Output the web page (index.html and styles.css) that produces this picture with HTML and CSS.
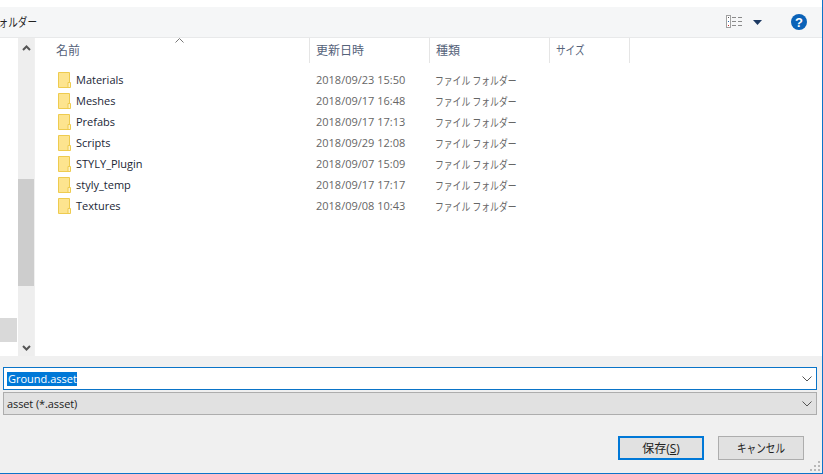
FILE: index.html
```html
<!DOCTYPE html>
<html lang="ja">
<head>
<meta charset="utf-8">
<title>保存</title>
<link rel="stylesheet" href="styles.css">
</head>
<body>
<div class="window">
  <div class="titlebar"></div>
  <div class="toolbar">
    <span class="crumb narrow">フォルダー</span>
    <svg class="view-icon" width="17" height="14" viewBox="0 0 17 14">
      <rect x="0.5" y="0.5" width="4" height="12" fill="#fff" stroke="#a0a0a0"/>
      <rect x="2" y="2" width="1" height="1" fill="#555"/>
      <rect x="2" y="6" width="1" height="1" fill="#2a6ab0"/>
      <rect x="2" y="10" width="1" height="1" fill="#c03030"/>
      <path d="M6 2.5h4M12 2.5h4M6 6.5h4M12 6.5h4M6 10.5h4M12 10.5h4" stroke="#8a8a8a" fill="none"/>
    </svg>
    <svg class="caret" width="9" height="5" viewBox="0 0 9 5"><path d="M0 0h9L4.5 5z" fill="#1d3a63"/></svg>
    <svg class="help" width="16" height="16" viewBox="0 0 16 16">
      <circle cx="8" cy="8" r="8" fill="#0a62b8"/>
      <text x="8" y="12.5" class="help-mark">?</text>
    </svg>
  </div>
  <div class="main">
    <div class="nav">
      <div class="nav-selected"></div>
    </div>
    <div class="scrollbar">
      <svg width="9" height="6" viewBox="0 0 9 6"><path d="M1 5l3.5-3.5L8 5" fill="none" stroke="#555" stroke-width="2"/></svg>
      <div class="scroll-track"><div class="scroll-thumb"></div></div>
      <svg width="9" height="6" viewBox="0 0 9 6"><path d="M1 1l3.5 3.5L8 1" fill="none" stroke="#555" stroke-width="2"/></svg>
    </div>
    <div class="list">
      <div class="list-head">
        <svg class="sort" width="9" height="5" viewBox="0 0 9 5"><path d="M.5 4.5l4-4 4 4" fill="none" stroke="#777"/></svg>
        <div class="col col-name">名前</div>
        <div class="col col-date">更新日時</div>
        <div class="col col-type">種類</div>
        <div class="col col-size"><span class="narrow">サイズ</span></div>
      </div>
      <div class="rows">
        <div class="row"><svg class="folder" width="13" height="16" viewBox="0 0 13 16"><path d="M.5.5h11v15H.5z" fill="#fde48f" stroke="#eecb4f"/><path d="M10 10.5h2.5v5H10z" fill="#fff3c4" stroke="#eecb4f"/></svg><span class="name">Materials</span><span class="date">2018/09/23 15:50</span><span class="type narrow">ファイル フォルダー</span></div>
        <div class="row"><svg class="folder" width="13" height="16" viewBox="0 0 13 16"><path d="M.5.5h11v15H.5z" fill="#fde48f" stroke="#eecb4f"/><path d="M10 10.5h2.5v5H10z" fill="#fff3c4" stroke="#eecb4f"/></svg><span class="name">Meshes</span><span class="date">2018/09/17 16:48</span><span class="type narrow">ファイル フォルダー</span></div>
        <div class="row"><svg class="folder" width="13" height="16" viewBox="0 0 13 16"><path d="M.5.5h11v15H.5z" fill="#fde48f" stroke="#eecb4f"/><path d="M10 10.5h2.5v5H10z" fill="#fff3c4" stroke="#eecb4f"/></svg><span class="name">Prefabs</span><span class="date">2018/09/17 17:13</span><span class="type narrow">ファイル フォルダー</span></div>
        <div class="row"><svg class="folder" width="13" height="16" viewBox="0 0 13 16"><path d="M.5.5h11v15H.5z" fill="#fde48f" stroke="#eecb4f"/><path d="M10 10.5h2.5v5H10z" fill="#fff3c4" stroke="#eecb4f"/></svg><span class="name">Scripts</span><span class="date">2018/09/29 12:08</span><span class="type narrow">ファイル フォルダー</span></div>
        <div class="row"><svg class="folder" width="13" height="16" viewBox="0 0 13 16"><path d="M.5.5h11v15H.5z" fill="#fde48f" stroke="#eecb4f"/><path d="M10 10.5h2.5v5H10z" fill="#fff3c4" stroke="#eecb4f"/></svg><span class="name">STYLY_Plugin</span><span class="date">2018/09/07 15:09</span><span class="type narrow">ファイル フォルダー</span></div>
        <div class="row"><svg class="folder" width="13" height="16" viewBox="0 0 13 16"><path d="M.5.5h11v15H.5z" fill="#fde48f" stroke="#eecb4f"/><path d="M10 10.5h2.5v5H10z" fill="#fff3c4" stroke="#eecb4f"/></svg><span class="name">styly_temp</span><span class="date">2018/09/17 17:17</span><span class="type narrow">ファイル フォルダー</span></div>
        <div class="row"><svg class="folder" width="13" height="16" viewBox="0 0 13 16"><path d="M.5.5h11v15H.5z" fill="#fde48f" stroke="#eecb4f"/><path d="M10 10.5h2.5v5H10z" fill="#fff3c4" stroke="#eecb4f"/></svg><span class="name">Textures</span><span class="date">2018/09/08 10:43</span><span class="type narrow">ファイル フォルダー</span></div>
      </div>
    </div>
  </div>
  <div class="panel">
    <div class="field field-name">
      <span class="selected-text">Ground.asset</span>
      <svg width="10" height="6" viewBox="0 0 10 6"><path d="M.5.5L5 5 9.5.5" fill="none" stroke="#555"/></svg>
    </div>
    <div class="field field-type">
      <span class="type-text">asset (*.asset)</span>
      <svg width="10" height="6" viewBox="0 0 10 6"><path d="M.5.5L5 5 9.5.5" fill="none" stroke="#555"/></svg>
    </div>
    <div class="buttons">
      <div class="btn btn-primary">保存(<u>S</u>)</div>
      <div class="btn"><span class="narrow">キャンセル</span></div>
    </div>
    <svg class="grip" width="12" height="12" viewBox="0 0 12 12"><path d="M8 0h2v2H8zM4 4h2v2H4zM8 4h2v2H8zM0 8h2v2H0zM4 8h2v2H4zM8 8h2v2H8z" fill="#b8b8b8"/></svg>
  </div>
</div>
</body>
</html>
```
FILE: styles.css
```css
* { box-sizing: border-box; }
html, body { margin: 0; padding: 0; }
body {
  width: 823px;
  height: 474px;
  overflow: hidden;
  font-family: "Open Sans", "Noto Sans CJK JP", sans-serif;
  font-size: 11px;
  color: #1a1a1a;
}
.narrow {
  display: inline-block;
  transform: scaleX(0.8);
  transform-origin: left center;
  white-space: nowrap;
}
.window {
  width: 823px;
  height: 474px;
  display: flex;
  flex-direction: column;
  background: #fff;
  border-right: 1px solid #0c74c9;
  border-bottom: 1px solid #0c74c9;
}
.titlebar { height: 7px; flex: none; background: #fff; }
.toolbar {
  height: 31px;
  flex: none;
  display: flex;
  align-items: center;
  background: #f5f6f7;
  border-bottom: 1px solid #e8e9ea;
  overflow: hidden;
}
.crumb {
  margin-left: -11px;
  font-size: 12px;
  color: #222;
}
.view-icon { margin-left: auto; }
.caret { margin-left: 10px; margin-right: 29px; }
.help { margin-right: 15px; }
.help-mark {
  font-family: "Liberation Sans", sans-serif;
  font-size: 13px;
  font-weight: 700;
  fill: #fff;
  text-anchor: middle;
}
.main { flex: 1; min-height: 0; display: flex; }
.nav { width: 18px; flex: none; position: relative; background: #fff; }
.nav-selected {
  position: absolute;
  left: 0;
  top: 280px;
  width: 17px;
  height: 24px;
  background: #d9d9d9;
}
.scrollbar {
  width: 16px;
  flex: none;
  display: flex;
  flex-direction: column;
  align-items: center;
  background: #eee;
  padding: 7px 0 5px;
}
.scroll-track { flex: 1; width: 100%; padding-top: 128px; }
.scroll-thumb { height: 107px; background: #cdcdcd; }
.list {
  flex: 1;
  min-width: 0;
  border-left: 1px solid #f0f0f0;
  background: #fff;
  position: relative;
}
.list-head { display: flex; height: 25px; }
.sort { position: absolute; left: 140px; top: 0; }
.col {
  font-size: 12px;
  padding: 3px 0 0 6px;
  border-right: 1px solid #e5e5e5;
  height: 25px;
  color: #55627a;
}
.col-name { width: 275px; padding-left: 21px; }
.col-date { width: 120px; }
.col-type { width: 120px; }
.col-size { width: 80px; }
.rows { padding-top: 6px; }
.row { display: flex; align-items: center; height: 21px; }
.folder { margin-left: 23px; flex: none; }
.name { width: 240px; margin-left: 5px; color: #1a2635; font-size: 11px; }
.date { width: 119px; color: #666; font-size: 11px; }
.type { color: #666; font-size: 11px; }
.panel {
  height: 117px;
  flex: none;
  background: #f0f0f0;
  padding: 11px 5px 0 3px;
  position: relative;
}
.field {
  height: 23px;
  display: flex;
  align-items: center;
  justify-content: space-between;
  padding: 0 4px 0 3px;
  font-size: 11px;
}
.field-name { background: #fff; border: 1px solid #0a74c8; }
.field-type {
  margin-top: 2px;
  background: #e1e1e1;
  border: 1px solid #adadad;
  color: #222;
}
.type-text { letter-spacing: -0.1px; }
.selected-text {
  background: #0078d7;
  color: #fff;
  line-height: 14px;
  margin-left: 0;
  padding: 0 0 0 1px;
}
.buttons {
  display: flex;
  justify-content: flex-end;
  gap: 14px;
  margin-top: 21px;
  padding-right: 13px;
}
.btn {
  width: 86px;
  height: 24px;
  display: flex;
  align-items: center;
  justify-content: center;
  background: #e1e1e1;
  border: 1px solid #adadad;
  font-size: 12px;
  color: #222;
}
.btn .narrow { margin-right: -12px; }
.btn-primary { border: 2px solid #0078d7; }
.grip { position: absolute; right: 0; bottom: 0; }
```
